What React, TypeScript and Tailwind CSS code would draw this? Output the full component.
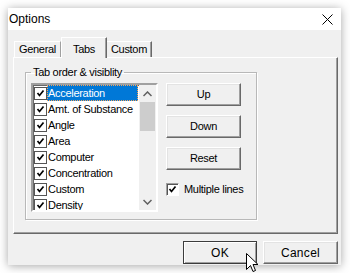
const items = [
  "Acceleration",
  "Amt. of Substance",
  "Angle",
  "Area",
  "Computer",
  "Concentration",
  "Custom",
  "Density",
];

function Check() {
  return (
    <svg width="9" height="9" viewBox="0 0 9 9">
      <path d="M1.5 4 L3.5 6.5 L7.5 1.5" fill="none" stroke="#000" strokeWidth="1.7" />
    </svg>
  );
}

function ListCheck() {
  return (
    <span className="flex items-center justify-center w-[13px] h-[13px] border border-[#555] bg-white shrink-0">
      <Check />
    </span>
  );
}

function Button({ label, primary }: { label: string; primary?: boolean }) {
  return (
    <div
      className={`flex items-center justify-center h-[23px] bg-[#f0f0f0] border ${
        primary
          ? "border-[#3c3c3c] shadow-[inset_1px_1px_0_#fff,inset_-1px_-1px_0_#a0a0a0]"
          : "border-t-white border-l-white border-r-[#696969] border-b-[#696969] shadow-[inset_-1px_-1px_0_#a0a0a0,inset_1px_1px_0_#e3e3e3]"
      }`}
    >
      {label}
    </div>
  );
}

export default function App() {
  return (
    <div className="relative w-[350px] h-[273px] bg-white pt-[8px] pl-[8px] overflow-hidden font-['Liberation_Sans',Arial,sans-serif] text-black">
      <div className="flex flex-col w-[333px] h-[257px] bg-[#f0f0f0] shadow-[0_1px_9px_rgba(0,0,0,0.35)]">
        {/* title bar */}
        <div className="flex items-center justify-between h-[22px] bg-white pl-[1px] pr-[8px] text-[12px]">
          <span>Options</span>
          <svg width="11" height="11" viewBox="0 0 11 11">
            <path d="M0.5 0.5 L10.5 10.5 M10.5 0.5 L0.5 10.5" stroke="#000" strokeWidth="1" />
          </svg>
        </div>

        <div className="flex flex-col pl-[5px] pt-[7px] text-[11px] tracking-[-0.3px]">
          {/* tab strip */}
          <div className="flex items-end h-[20px] pl-[1px]">
            <div className="flex items-center justify-center w-[47px] h-[16px] border-t border-l border-t-white border-l-white border-r border-r-[#a0a0a0]">
              General
            </div>
            <div className="relative z-10 flex items-start justify-center pt-[3px] w-[46px] h-[21px] -mb-[1px] bg-[#f0f0f0] border-t border-l border-t-white border-l-white border-r border-r-[#696969] shadow-[inset_-1px_0_0_#a0a0a0]">
              Tabs
            </div>
            <div className="flex items-center justify-center w-[45px] h-[16px] border-t border-t-white border-r border-r-[#696969] shadow-[inset_-1px_0_0_#a0a0a0]">
              Custom
            </div>
          </div>

          {/* tab panel */}
          <div className="w-[325px] h-[177px] border border-t-white border-l-white border-r-[#696969] border-b-[#696969] shadow-[inset_-1px_-1px_0_#a0a0a0]">
            <fieldset className="mt-[7px] ml-[11px] w-[232px] h-[155px] border border-[#b8b8b8] shadow-[inset_1px_1px_0_#fff,1px_1px_0_#fff] pl-[5px] pt-[4px]">
              <legend className="px-[2px] leading-[14px]">Tab order &amp; visiblity</legend>
              <div className="flex gap-[8px]">
                {/* listbox */}
                <div className="flex w-[127px] h-[129px] border-2 border-t-[#a0a0a0] border-l-[#a0a0a0] border-r-white border-b-white shadow-[inset_1px_1px_0_#696969] bg-white overflow-hidden">
                  <div className="flex-1 flex flex-col">
                    {items.map((item, i) => (
                      <div key={item} className="flex items-center h-[16px] pl-[1px] shrink-0">
                        <ListCheck />
                        <span
                          className={`h-[16px] flex items-center px-[1px] whitespace-nowrap ${
                            i === 0
                              ? "bg-[#0078d7] text-white outline outline-1 outline-dotted outline-[#f5a35a] -outline-offset-1 pr-[33px]"
                              : ""
                          }`}
                        >
                          {item}
                        </span>
                      </div>
                    ))}
                  </div>
                  {/* scrollbar */}
                  <div className="flex flex-col w-[17px] bg-[#f0f0f0]">
                    <div className="flex items-center justify-center h-[17px]">
                      <svg width="9" height="6" viewBox="0 0 9 6">
                        <path d="M0.5 5 L4.5 1 L8.5 5" fill="none" stroke="#606060" strokeWidth="1.5" />
                      </svg>
                    </div>
                    <div className="h-[29px] mx-[1px] bg-[#cdcdcd]" />
                    <div className="flex-1" />
                    <div className="flex items-center justify-center h-[17px]">
                      <svg width="9" height="6" viewBox="0 0 9 6">
                        <path d="M0.5 1 L4.5 5 L8.5 1" fill="none" stroke="#606060" strokeWidth="1.5" />
                      </svg>
                    </div>
                  </div>
                </div>

                {/* side buttons */}
                <div className="flex flex-col w-[75px]">
                  <Button label="Up" />
                  <div className="h-[9px]" />
                  <Button label="Down" />
                  <div className="h-[9px]" />
                  <Button label="Reset" />
                  <div className="flex items-center gap-[5px] mt-[11px] whitespace-nowrap">
                    <span className="flex items-center justify-center w-[13px] h-[13px] shrink-0 border border-t-[#a0a0a0] border-l-[#a0a0a0] border-r-white border-b-white shadow-[inset_1px_1px_0_#555] bg-white">
                      <Check />
                    </span>
                    <span>Multiple lines</span>
                  </div>
                </div>
              </div>
            </fieldset>
          </div>

          {/* dialog buttons */}
          <div className="flex justify-end gap-[6px] mt-[7px] pr-[3px] text-[12px] tracking-[0.3px]">
            <div className="w-[74px]">
              <Button label="OK" primary />
            </div>
            <div className="w-[75px]">
              <Button label="Cancel" />
            </div>
          </div>
        </div>
      </div>

      {/* mouse cursor */}
      <svg className="absolute left-[246px] top-[253px]" width="13" height="20" viewBox="0 0 13 20">
        <path
          d="M0.5 0.5 L0.5 16.5 L4.5 12.5 L7 18.5 L9.5 17.5 L7 11.5 L12 11.5 Z"
          fill="#fff"
          stroke="#000"
          strokeWidth="1"
        />
      </svg>
    </div>
  );
}
